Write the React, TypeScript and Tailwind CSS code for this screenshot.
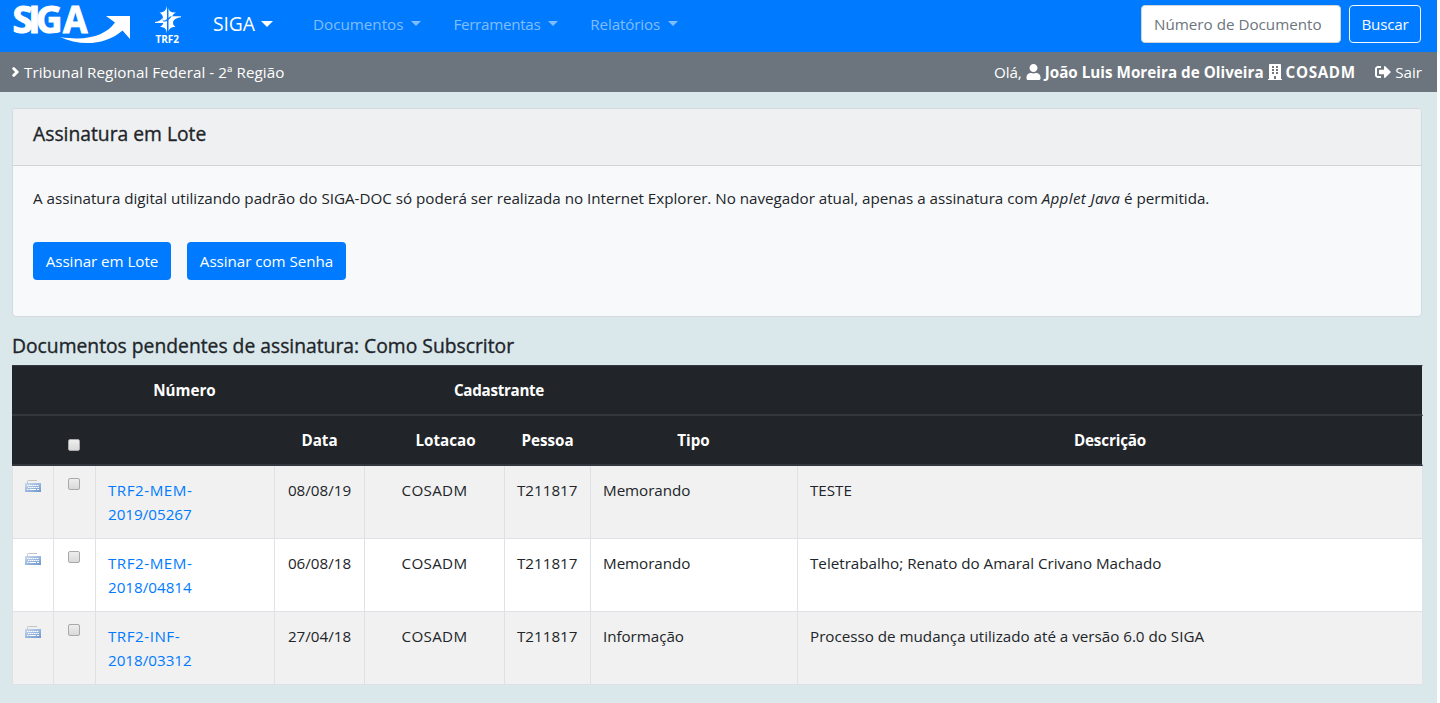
import React from "react";
import { FaBuilding, FaChevronRight, FaSignOutAlt, FaUser } from "react-icons/fa";

const documents = [
  { prefix: "TRF2-MEM-", number: "2019/05267", date: "08/08/19", unit: "COSADM", person: "T211817", kind: "Memorando", description: "TESTE" },
  { prefix: "TRF2-MEM-", number: "2018/04814", date: "06/08/18", unit: "COSADM", person: "T211817", kind: "Memorando", description: "Teletrabalho; Renato do Amaral Crivano Machado" },
  { prefix: "TRF2-INF-", number: "2018/03312", date: "27/04/18", unit: "COSADM", person: "T211817", kind: "Informação", description: "Processo de mudança utilizado até a versão 6.0 do SIGA" },
];

function SigaLogo() {
  return (
    <svg width="120" height="46" viewBox="12 0 120 46" fill="#fff" className="shrink-0 overflow-visible">
      <g fontFamily="'Open Sans', sans-serif" fontWeight="700" fontSize="37" stroke="#fff" strokeWidth="1">
        <text x="12.5" y="33" textLength="50" lengthAdjust="spacing">SIG</text>
        <text x="63" y="33" textLength="24.5" lengthAdjust="spacingAndGlyphs">A</text>
      </g>
      <path d="M60 37C79 46 105 46 122.500 30.500L130 39V16H106L115 22.500C106 35 88 41.500 60 37Z" />
    </svg>
  );
}

function Trf2Logo() {
  return (
    <svg width="28" height="44" viewBox="154 2 28 44" fill="#fff" className="shrink-0">
      <path d="M167 5.500V19L165 20.500H163C163.500 17 162.500 14 159.500 12.500C164 12.500 166.500 10 167 5.500Z" />
      <path d="M168.500 8C169 11.500 171.500 13 176 12.500C173.500 13.800 172.500 15 172.300 16.500H170L168.500 18Z" />
      <path d="M172 16.200H181V17.200C176 17.800 173.500 19.500 173 22.500C173 24.500 173.800 25.800 175.500 27C171 26.500 169 29 168.500 31.500V20Z" />
      <path d="M155 23V22C159 21.500 161.500 20 162.500 17.500L163 21.500H165.500L167 21V33.500C166.500 29 164.500 27 160 27C162 25.800 163 24.500 163.300 23Z" />
      <text x="155.500" y="43" textLength="23.500" lengthAdjust="spacingAndGlyphs" fontFamily="'Open Sans', sans-serif" fontWeight="700" fontSize="10.300">TRF2</text>
    </svg>
  );
}

function Caret({ className }: { className: string }) {
  return <span className={`block h-0 w-0 border-x-transparent border-t-current ${className}`} />;
}

function NavItem({ label, className }: { label: string; className: string }) {
  return (
    <a className={`flex items-center gap-2 text-[#80bdff] ${className}`}>
      {label}
      <Caret className="-mt-0.5 border-x-[5px] border-t-[5px]" />
    </a>
  );
}

function Checkbox({ className = "" }: { className?: string }) {
  return (
    <span className={`block h-3 w-3 rounded-[2px] border border-[#a9a9a9] bg-linear-to-b from-[#eeeeee] to-[#d9d9d9] ${className}`} />
  );
}

function KeyboardIcon() {
  return (
    <svg width="16" height="16" viewBox="0 0 16 16" className="mx-auto block">
      <defs>
        <linearGradient id="keys" x1="0" y1="0" x2="1" y2="1">
          <stop offset="0" stopColor="#c9daef" />
          <stop offset="1" stopColor="#6c95cd" />
        </linearGradient>
      </defs>
      <path d="M2.500 5V3.500Q2.500 2.500 3.500 2.500H12" fill="none" stroke="#c4c4c4" />
      <rect x="0" y="5" width="16" height="9" fill="url(#keys)" />
      <path d="M2 7.500H14M3 9.500H14" stroke="#fff" strokeDasharray="1.500 .5" />
      <path d="M2 11.500H3.500M4.500 11.500H11M12 11.500H14" stroke="#fff" />
    </svg>
  );
}

export default function App() {
  const th = "border-b-2 border-[#32383e] bg-[#212529] p-0 pb-px text-center font-bold";
  const td = "border-r border-b border-[#dee2e6] px-3 pt-3 align-top";
  return (
    <div className="min-h-[703px] bg-white pr-[3px] font-['Open_Sans',sans-serif] text-[15.2px] leading-6 text-[#212529]">
      <div className="min-h-[703px] bg-[#dae8ec]">
        <nav className="flex h-[52px] items-start bg-[#007bff] pl-3">
          <SigaLogo />
          <div className="ml-[22px] pt-0.5"><Trf2Logo /></div>
          <div className="flex h-12 flex-1 items-center whitespace-nowrap">
            <a className="ml-[31px] flex w-[60px] items-center justify-between text-[19.3px] tracking-[-0.1px] text-white">
              SIGA
              <Caret className="border-x-[6px] border-t-[6px]" />
            </a>
            <NavItem label="Documentos" className="ml-10" />
            <NavItem label="Ferramentas" className="ml-8 tracking-[-0.3px]" />
            <NavItem label="Relatórios" className="ml-8 tracking-[-0.15px]" />
            <div className="mr-4 ml-auto flex gap-2">
              <input
                placeholder="Número de Documento"
                className="h-[38px] w-[200px] rounded border border-[#ced4da] bg-white px-3 placeholder:text-[#6c757d] placeholder:opacity-100"
              />
              <button className="h-[38px] w-[72px] rounded border border-[#f8f9fa] tracking-[-0.2px] text-[#f8f9fa]">Buscar</button>
            </div>
          </div>
        </nav>

        <div className="flex h-10 items-center justify-between bg-[#6c757d] pr-[15px] pl-[11px] whitespace-nowrap text-white">
          <div className="flex items-center gap-1 tracking-[0.06px]">
            <FaChevronRight className="h-[10px] w-[9px] stroke-white [stroke-width:70]" />
            Tribunal Regional Federal - 2ª Região
          </div>
          <div className="flex items-center gap-1">
            <span className="tracking-[-0.1px]">Olá,</span>
            <FaUser className="h-4 w-[15px]" />
            <b className="tracking-[0.03px]">João Luis Moreira de Oliveira</b>
            <FaBuilding className="h-4 w-[14px]" />
            <b className="tracking-[0.65px]">COSADM</b>
            <FaSignOutAlt className="ml-[15.5px] h-4 w-4" />
            <span>Sair</span>
          </div>
        </div>

        <main className="pt-4 pl-3">
          <section className="h-[209px] w-[1410px] overflow-hidden rounded border border-[#d3d9dc] bg-[#f8f9fb]">
            <h5 className="h-[57px] border-b border-[#d2d4d6] bg-[#eff0f1] px-5 pt-[13px] text-[19.3px] font-medium [-webkit-text-stroke:0.35px_#212529]">Assinatura em Lote</h5>
            <div className="px-5 pt-5">
              <p className="whitespace-nowrap tracking-[-0.01px]">
                A assinatura digital utilizando padrão do SIGA-DOC só poderá ser realizada no Internet Explorer. No navegador atual, apenas a assinatura com <i className="tracking-[0.35px]">Applet Java</i> é permitida.
              </p>
              <div className="mt-8 flex gap-4 text-white">
                <button className="h-[38px] w-[138px] rounded bg-[#007bff] tracking-[-0.05px]">Assinar em Lote</button>
                <button className="h-[38px] w-[159px] rounded bg-[#007bff] tracking-[-0.05px]">Assinar com Senha</button>
              </div>
            </div>
          </section>

          <h5 className="mt-4 h-8 pt-px text-[19.3px] leading-6 font-medium [-webkit-text-stroke:0.35px_#212529]">Documentos pendentes de assinatura: Como Subscritor</h5>

          <table className="w-[1411px] table-fixed border-separate border-spacing-0">
            <colgroup>
              <col className="w-[42px]" />
              <col className="w-[42px]" />
              <col className="w-[179px]" />
              <col className="w-[90px]" />
              <col className="w-[140px]" />
              <col className="w-[86px]" />
              <col className="w-[207px]" />
              <col className="w-[625px]" />
            </colgroup>
            <thead className="text-white">
              <tr className="h-[51px]">
                <th className={`${th} border-t`} colSpan={2} />
                <th className={`${th} border-t pr-0.5`}>Número</th>
                <th className={`${th} border-t`} />
                <th className={`${th} border-t tracking-[-0.3px]`} colSpan={2}><span className="pl-[42px]">Cadastrante</span></th>
                <th className={`${th} border-t`} />
                <th className={`${th} border-t border-r border-r-[#dae8ec]`} />
              </tr>
              <tr className="h-[50px]">
                <th className={th} />
                <th className={th}><Checkbox className="mt-[10px] ml-[14px]" /></th>
                <th className={th} />
                <th className={`${th} pr-px`}>Data</th>
                <th className={th}><span className="pl-[21px]">Lotacao</span></th>
                <th className={`${th} pr-px`}>Pessoa</th>
                <th className={`${th} pr-0.5`}>Tipo</th>
                <th className={`${th} border-r border-r-[#dae8ec] tracking-[-0.15px]`}>Descrição</th>
              </tr>
            </thead>
            <tbody>
              {documents.map((doc) => (
                <tr key={doc.number} className="h-[73px] bg-white odd:bg-[#f1f1f1]">
                  <td className={`${td} border-l`}><KeyboardIcon /></td>
                  <td className={td}><Checkbox className="ml-0.5" /></td>
                  <td className={`${td} text-[#007bff]`}>
                    <a className="block tracking-[0.5px]">{doc.prefix}</a>
                    <a className="block">{doc.number}</a>
                  </td>
                  <td className={`${td} text-center whitespace-nowrap`}>{doc.date}</td>
                  <td className={`${td} text-center tracking-[0.3px]`}>{doc.unit}</td>
                  <td className={`${td} whitespace-nowrap`}>{doc.person}</td>
                  <td className={`${td} tracking-[-0.05px]`}>{doc.kind}</td>
                  <td className={`${td} tracking-[-0.01px]`}>{doc.description}</td>
                </tr>
              ))}
            </tbody>
          </table>
        </main>
      </div>
    </div>
  );
}
